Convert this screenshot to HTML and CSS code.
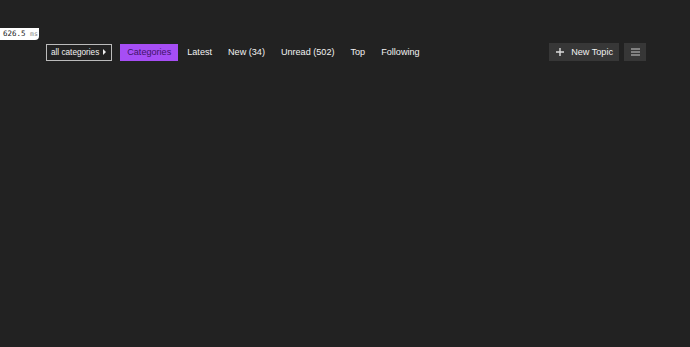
FILE: index.html
```html
<!DOCTYPE html>
<html lang="en">
  <head>
    <meta charset="UTF-8" />
    <meta name="viewport" content="width=device-width, initial-scale=1.0" />
    <title>Categories</title>
    <link rel="stylesheet" href="styles.css">
  </head>
  <body>
    <div class="profiler">626.5 <span class="unit">ms</span></div>
    <div class="container">
      <div class="nav-bar">
        <button class="category-drop">all categories <span class="caret"></span></button>
        <ul class="nav-pills">
          <li><a class="active" href="#">Categories</a></li>
          <li><a href="#">Latest</a></li>
          <li><a href="#">New (34)</a></li>
          <li><a href="#">Unread (502)</a></li>
          <li><a href="#">Top</a></li>
          <li><a href="#">Following</a></li>
        </ul>
        <div class="actions">
          <button class="btn new-topic">
            <svg width="8" height="8" viewBox="0 0 8 8"><path d="M4 0v8M0 4h8" stroke="#ddd" stroke-width="1.4"/></svg>
            New Topic
          </button>
          <button class="btn menu">
            <svg width="9" height="8" viewBox="0 0 9 8"><path d="M0 1h9M0 4h9M0 7h9" stroke="#ccc" stroke-width="1.2"/></svg>
          </button>
        </div>
      </div>
    </div>
  </body>
</html>
```

FILE: styles.css
```css
body {
  margin: 0;
  background: #222222;
  font-family: "Liberation Sans", Arial, sans-serif;
  color: #eeeeee;
  height: 347px;
}
.profiler {
  position: absolute;
  top: 28px;
  left: 0;
  width: 36px;
  height: 12px;
  padding-left: 3px;
  background: #ffffff;
  border-bottom-right-radius: 4px;
  font-family: "DejaVu Sans Mono", monospace;
  font-size: 7.5px;
  line-height: 12px;
  color: #222;
}
.profiler .unit {
  color: #888;
  font-size: 6.5px;
}
.container {
  width: 600px;
  margin: 0 auto;
  padding-top: 43px;
}
.nav-bar {
  display: flex;
  align-items: center;
  height: 18px;
}
.category-drop {
  display: flex;
  align-items: center;
  height: 17px;
  margin-left: 1px;
  padding: 0 5px 0 4px;
  background: transparent;
  border: 1px solid #bbbbbb;
  color: #f2f2f2;
  font-family: inherit;
  font-size: 8.2px;
  gap: 4px;
}
.caret {
  width: 0;
  height: 0;
  border-top: 3px solid transparent;
  border-bottom: 3px solid transparent;
  border-left: 3px solid #eeeeee;
}
.nav-pills {
  display: flex;
  gap: 2px;
  list-style: none;
  margin: 0 0 0 8px;
  padding: 0;
}
.nav-pills a {
  display: block;
  padding: 0 7px;
  line-height: 17px;
  font-size: 9.1px;
  color: #f2f2f2;
  text-decoration: none;
}
.nav-pills a.active {
  background: #a64ef5;
  color: #3d1466;
}
.actions {
  display: flex;
  gap: 5px;
  margin-left: auto;
  margin-right: -1px;
}
.btn {
  display: flex;
  align-items: center;
  height: 18px;
  border: none;
  background: #373737;
  color: #f2f2f2;
  font-family: inherit;
  font-size: 9.1px;
}
.new-topic {
  gap: 7px;
  padding: 0 6px 0 7px;
}
.menu {
  width: 22px;
  justify-content: center;
  padding: 0;
}
```
